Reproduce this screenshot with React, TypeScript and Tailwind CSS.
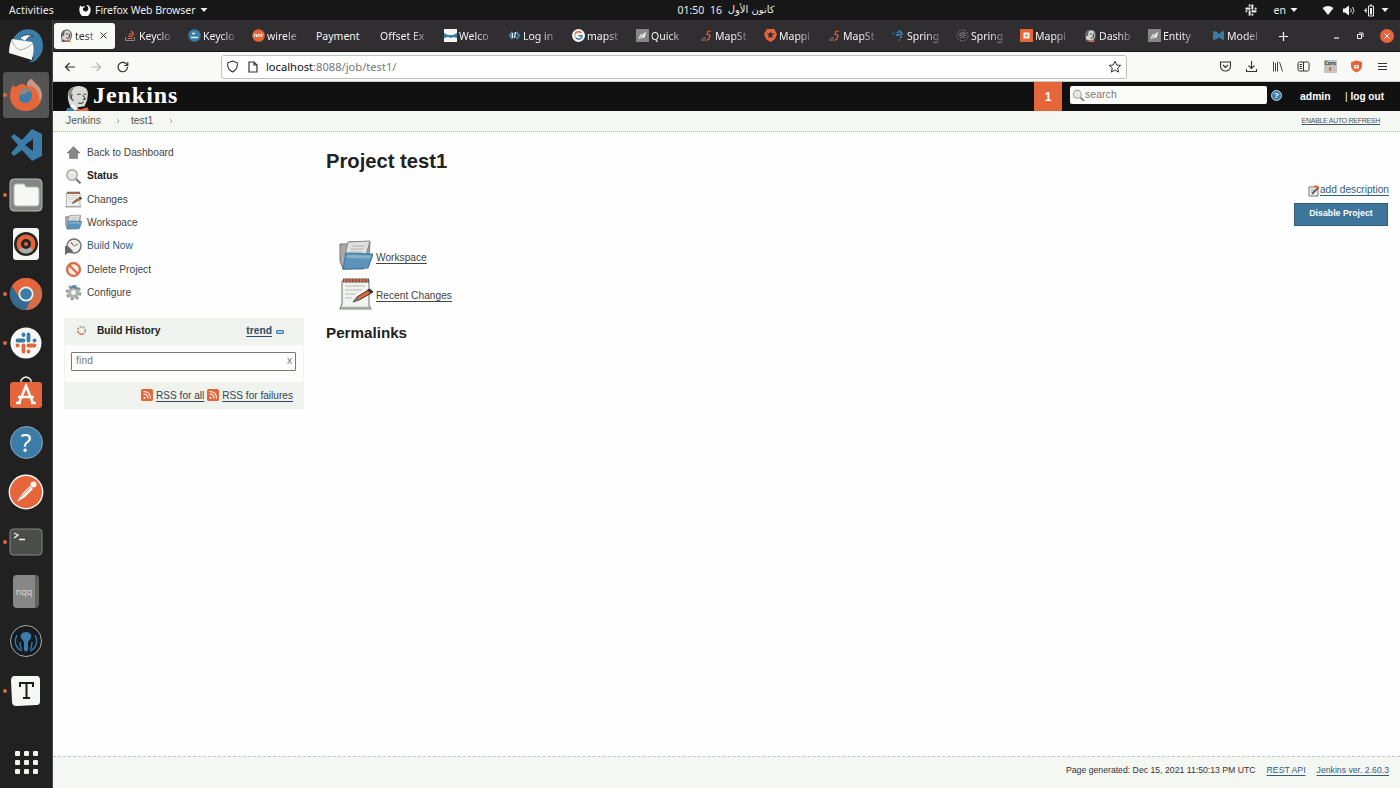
import React from "react";

type IconProps = { size?: number; className?: string; box?: string; children: React.ReactNode };

function Svg({ size = 16, className = "", box = "0 0 16 16", children }: IconProps) {
  return (
    <svg width={size} height={size} viewBox={box} fill="none" className={`shrink-0 ${className}`}>
      {children}
    </svg>
  );
}

const O = "#e5663a";
const B = "#3b7ca9";

/* ---------- launcher icons (36 x 36) ---------- */

const Thunderbird = () => (
  <Svg size={36} box="0 0 36 36">
    <path d="M8 7C13 0 25-1 31 6c6 8 5 18-1 24-2 3-6 5-9 4 3-1 5-3 5-5L5 22C2 16 4 11 8 7Z" fill={B} />
    <path d="M4 11 24 14c3 5 1 13 0 18L1 25c0-6 1-10 3-14Z" fill="#f7f8f5" />
    <path d="M4 13c2 5 5 8 8 9 5-1 9-3 13-7" stroke="#aaa" strokeWidth="1" />
    <path d="M12 10c4-4 9-4 13-2-3 0-6 2-7 5" fill="#f7f8f5" stroke="#24465f" strokeWidth="1" />
  </Svg>
);

const Firefox = () => (
  <Svg size={36} box="0 0 36 36">
    <path d="M5 8c1 1 2 2 3 2 2-2 4-3 7-3l4 2c0-3 1-6 5-7 1 4 9 6 10 16 0 9-7 16-16 16S2 28 2 19c0-4 1-8 3-11Z" fill={O} />
    <path d="M19 9c0-3 1-6 5-7 1 4 9 6 10 16-1 4-2 6-3 7 1-7-1-13-8-16Z" fill="#c59a89" />
    <path d="M13 14c4-4 11-2 11 4s-4 8-7 8c-5 0-7-4-5-8l5-1c1-1-1-3-4-3Z" fill={B} />
    <path d="M13 13c4-3 9-2 11 2-3-1-5 0-7 2l-5 1c-2 0 0-3 1-5Z" fill="#8b8682" />
  </Svg>
);

const VSCode = () => (
  <Svg size={36} box="0 0 36 36">
    <path fillRule="evenodd" d="m24 2 10 5v22l-10 5-10-11-8 6-3-3 7-8-7-8 3-3 8 6L24 2Zm1 10-8 6 8 6V12Z" fill={B} />
  </Svg>
);

const Files = () => (
  <Svg size={36} box="0 0 36 36">
    <rect x="2" y="2" width="32" height="32" rx="4" fill="#848684" stroke="#b9bcb8" />
    <path d="M6 10c0-2 1-3 2-3h8l2 3h10c2 0 3 1 3 3v13c0 2-1 3-3 3H9c-2 0-3-1-3-3V10Z" fill="#f6f8f4" stroke="#b9bcb8" />
  </Svg>
);

const Rhythmbox = () => (
  <Svg size={36} box="0 0 36 36">
    <rect x="5" y="2" width="26" height="32" rx="3" fill="#f5f6f2" />
    <circle cx="18" cy="18" r="12" fill="#262626" />
    <circle cx="18" cy="18" r="9.5" fill={O} />
    <path d="M18 18 11 24a9 9 0 0 0 14 0Z" fill="#aaa" />
    <circle cx="18" cy="18" r="5" fill="#262626" />
    <circle cx="18" cy="18" r="2" fill={O} />
  </Svg>
);

const Chrome = () => (
  <Svg size={36} box="0 0 36 36">
    <circle cx="18" cy="18" r="16" fill={O} />
    <path d="M4 10a16 16 0 0 0 14 24l5-11-5-1Z" fill="#356b91" />
    <path d="M33 12a16 16 0 0 1-15 22l7-12-1-10Z" fill="#cf6e49" />
    <path d="M4 10c3-5 8-8 14-8s13 4 15 10H18l-7 9Z" fill={O} />
    <circle cx="18" cy="18" r="7.500" fill="#f5f6f2" />
    <circle cx="18" cy="18" r="5.800" fill={B} />
  </Svg>
);

const SlackMark = ({ a, b }: { a: string; b: string }) => (
  <g strokeWidth="3.8" strokeLinecap="round">
    <path d="M15.500 9.500v.5M9.500 15.500h6" stroke={a} />
    <path d="M20.500 9.500v6M26.500 15.500h.1" stroke={a} />
    <path d="M20.500 20.500h6M20.500 26.500v.1" stroke={b} />
    <path d="M15.500 20.500v6M9.500 20.500h.1" stroke={b} />
  </g>
);

const Slack = () => (
  <Svg size={36} box="0 0 36 36">
    <circle cx="18" cy="18" r="15.500" fill="#f7f8f5" />
    <SlackMark a={B} b={O} />
  </Svg>
);

const Software = () => (
  <Svg size={36} box="0 0 36 36">
    <path d="M13 8V5q5-6 10 0v3" stroke="#f4f4f0" strokeWidth="1.300" />
    <rect x="2" y="7" width="32" height="26" rx="3" fill={O} />
    <path d="m11 28 7-17 7 17M10 22h16M8 28h5M23 28h5" stroke="#f8f8f4" strokeWidth="2.600" />
  </Svg>
);

const Help = () => (
  <div className="flex size-[33px] items-center justify-center rounded-full border border-[#8baabd] bg-[#3b7ca9] font-['Noto_Sans',sans-serif] text-[25px] leading-none text-white">
    ?
  </div>
);

const Postman = () => (
  <Svg size={36} box="0 0 36 36">
    <circle cx="18" cy="18" r="16.700" fill={O} stroke="#f7f8f5" strokeWidth="1.400" />
    <circle cx="25.500" cy="10.500" r="3" fill="#f8f8f4" />
    <path d="m9 28 5-8 8-8 3 3-8 8-8 5Z" fill="#f8f8f4" />
    <path d="m13 23 9-9" stroke={O} strokeWidth=".7" />
  </Svg>
);

const Terminal = () => (
  <Svg size={36} box="0 0 36 36">
    <rect x="2" y="5" width="32" height="26" rx="3" fill="#4b4d4b" stroke="#858785" />
    <path d="m6 9 4 2-4 3M11 15.500h6" stroke="#f4f4f0" strokeWidth="1.300" />
  </Svg>
);

const Nqq = () => (
  <div className="flex h-[33px] w-[26px] items-center justify-center rounded-sm border-r-4 border-[#606260] bg-[#868886] font-['Noto_Sans',sans-serif] text-[9px] text-[#d5d8d4]">
    nqq
  </div>
);

const Kraken = () => (
  <Svg size={36} box="0 0 36 36">
    <circle cx="18" cy="18" r="15.500" fill="#151b20" stroke="#a8aaa8" />
    <path d="M18 9c-4 0-6 3-5 6l3 4v8l2 2 2-2v-8l3-4c1-3-1-6-5-6Z" fill={B} />
    <path d="M9 12c-4 8 0 14 5 16M27 12c4 8 0 14-5 16M12 19c0 3 0 5 2 7M24 19c0 3 0 5-2 7" stroke={B} strokeWidth="1.300" />
  </Svg>
);

const Typora = () => (
  <Svg size={36} box="0 0 36 36">
    <path d="M7 3h21c3 0 4 1 4 4v21c0 3-1 4-4 4L9 33c-4 0-5-2-5-5L3 8c0-3 1-5 4-5Z" fill="#f5f7f3" />
    <path d="M12 14v-4h13v4M18.500 10v15M15 25h7" stroke="#1a1a1a" strokeWidth="2" />
  </Svg>
);

const launcher: { icon: React.ReactNode; dot?: boolean; active?: boolean }[] = [
  { icon: <Thunderbird /> },
  { icon: <Firefox />, dot: true, active: true },
  { icon: <VSCode /> },
  { icon: <Files />, dot: true },
  { icon: <Rhythmbox /> },
  { icon: <Chrome />, dot: true },
  { icon: <Slack />, dot: true },
  { icon: <Software /> },
  { icon: <Help /> },
  { icon: <Postman /> },
  { icon: <Terminal />, dot: true },
  { icon: <Nqq /> },
  { icon: <Kraken /> },
  { icon: <Typora />, dot: true },
];

function Dock() {
  return (
    <nav className="flex w-[53px] shrink-0 flex-col border-r border-[#484648] bg-[#222122] pt-px">
      {launcher.map((item, i) => (
        <div key={i} className="relative flex h-[49.6px] shrink-0 items-center justify-center px-[3px]">
          {item.dot && <span className="absolute left-[3px] size-1 rounded-full bg-[#e5663a]" />}
          <div className={item.active ? "flex h-[46px] w-full items-center justify-center rounded-[3px] bg-[#555455]" : "flex items-center justify-center"}>
            {item.icon}
          </div>
        </div>
      ))}
      <div className="mt-auto mb-[14px] grid grid-cols-3 gap-1 self-center">
        {Array.from({ length: 9 }, (_, i) => (
          <span key={i} className="size-[5px] rounded-[1px] bg-[#f2f3ef]" />
        ))}
      </div>
    </nav>
  );
}

/* ---------- desktop top bar ---------- */

const Caret = () => (
  <Svg size={8} box="0 0 8 8">
    <path d="M0.500 2h7L4 6Z" fill="#f2f2f2" />
  </Svg>
);

function TopBar() {
  return (
    <header className="grid h-5 shrink-0 grid-cols-[1fr_auto_1fr] items-center bg-[#171717] font-['Noto_Sans','DejaVu_Sans',sans-serif] text-[10.5px] leading-5 text-[#ececec]">
      <div className="flex items-center pl-[9px]">
        <span className="w-[70px] tracking-[0.12px]">Activities</span>
        <Svg size={12} box="0 0 12 12">
          <path d="M1.500 1.500 3 3l2-1 1 1-2 1c-1 3 3 5 5 2 1-2 0-4-2-5 4 0 5 3 4.500 6a5.500 5.500 0 0 1-11 0C0 5 .500 3 1.500 1.500Z" fill="#fff" />
        </Svg>
        <span className="mr-[5px] ml-1 w-[100px] whitespace-nowrap tracking-[-0.06px]">Firefox Web Browser</span>
        <Caret />
      </div>
      <div className="flex w-[97px] translate-x-[26px] items-center justify-between whitespace-nowrap">
        <span>01:50</span>
        <span>16</span>
        <span className="font-['DejaVu_Sans',sans-serif] text-[10px]">كانون الأول</span>
      </div>
      <div className="flex items-center justify-end pr-[11px]">
        <Svg size={12} box="7 7 22 22" className="mr-[17px]">
          <SlackMark a="#e6e6e6" b="#e6e6e6" />
        </Svg>
        <span className="mr-1">en</span>
        <Caret />
        <Svg size={12} box="0 0 12 12" className="ml-6">
          <path d="M.5 4q5.500-4 11 0L6 11Z" fill="#f4f4f4" />
        </Svg>
        <Svg size={13} box="0 0 13 12" className="ml-2">
          <path d="M1 4h2l4-3v10L3 8H1Z" fill="#f4f4f4" />
          <path d="M8.500 4q2 2 0 4M10.500 2.500q3 3.500 0 7" stroke="#ddd" />
        </Svg>
        <Svg size={13} box="0 0 13 13" className="ml-2">
          <path d="M5.500 2h5v10h-5zM7 1h2" stroke="#eee" />
          <path d="M7 4h2v6.500H7zM1 6h3v1H1zM2.500 4h1v5h-1z" fill="#eee" />
        </Svg>
        <span className="ml-[5px] flex">
          <Caret />
        </span>
      </div>
    </header>
  );
}

/* ---------- browser tabs ---------- */

const Butler = () => (
  <Svg size={13} box="0 0 26 26">
    <path d="M5 24C2 18 2 9 6 5s12-4 15 0 2 11 0 15l-4 4Z" fill="#d3d4d0" stroke="#555" strokeWidth="2" />
    <path d="M4 14C1 8 5 2 12 2l-3 4-1 8Z" fill="#666" />
    <path d="M12 10h4m2 0h3M18 11l2 4h-3M13 18q3 2 6-1" stroke="#333" strokeWidth="1.800" />
    <path d="m10 22 6 2 5-2v4H10Z" fill={O} />
    <path d="m2 25 5-4 4 5Z" fill="#555" />
  </Svg>
);

const StackIcon = () => (
  <Svg size={13} box="0 0 13 13">
    <path d="M1.500 8v3.500h9V8" stroke="#888" />
    <path d="M3.500 9.500h5M4 7l4.500 1M5 4.500l4 2M7 2l3 3.500" stroke={O} strokeWidth="1.200" />
  </Svg>
);
const BlueDot = () => (
  <Svg size={13} box="0 0 13 13">
    <circle cx="6.500" cy="6.500" r="6.200" fill={B} />
    <path d="M4 4.500h3M3 8.500h7" stroke="#e5eef2" strokeWidth="1.500" />
  </Svg>
);
const OrangeDot = () => (
  <Svg size={13} box="0 0 13 13">
    <circle cx="6.500" cy="6.500" r="6.300" fill={O} />
    <path d="M2.500 8V5.500h2V8M6 8V5.500h2V8M9.500 4v4M11 5.500 9.500 7" stroke="#fff" strokeWidth=".9" />
  </Svg>
);
const Handshake = () => (
  <Svg size={13} box="0 0 13 13">
    <path d="M0 0h13v13H0z" fill="#f6f7f3" />
    <path d="m0 4 4 2h5l4-2v5L9 8l-2 1-3-1-4 1Z" fill={B} />
  </Svg>
);
const BlueCode = () => (
  <Svg size={13} box="0 0 13 13">
    <path d="M4.500 3 2 6.500 4.500 10M8.500 3 11 6.500 8.500 10" stroke={B} strokeWidth="2.400" />
    <path d="M4.500 4v5M7.500 3 6.500 9" stroke="#dfe6ea" strokeWidth="1.400" />
  </Svg>
);
const Google = () => (
  <Svg size={13} box="0 0 13 13">
    <circle cx="6.500" cy="6.500" r="6.500" fill="#f7f8f5" />
    <path d="M9.500 4A4 4 0 0 0 3 5" stroke={O} strokeWidth="1.500" />
    <path d="M3 5a4 4 0 0 0 1 4" stroke="#bbb" strokeWidth="1.500" />
    <path d="M4 9.200c3 2 6 .5 6-2.500H6.500" stroke={B} strokeWidth="1.500" />
  </Svg>
);
const GreySquare = () => (
  <Svg size={13} box="0 0 13 13">
    <path d="M0 0h13v13H0z" fill="#858785" />
    <path d="m2.500 10 1.500-4 6-3-1 5Z" fill="#eceeea" />
    <path d="m4 9 4-5" stroke="#999" />
  </Svg>
);
const MapSt = () => (
  <Svg size={13} box="0 0 13 13">
    <path d="m11 2-3 .5L7 5.500l3 .5-1 4-3 1.500" stroke={O} strokeWidth="1.200" />
    <path d="M1 11h4M3 9h3" stroke="#888" />
  </Svg>
);
const Shield = () => (
  <Svg size={13} box="0 0 13 13">
    <path d="m3 0 7 0 3 5-2 5-4.500 3L2 10 0 5Z" fill={O} />
    <path d="m6.500 2.500 1 2h3L8 6.500 9 9 6.500 8 4 9l1-2.500-2.500-2h3Z" fill="#302e30" />
  </Svg>
);
const BlueBird = () => (
  <Svg size={13} box="0 0 13 13">
    <path d="m1 4 1 1M5 4l3-2 2 3-3 1M4 6h3M8 8h2M7 11h1" stroke={B} strokeWidth="1.800" />
  </Svg>
);
const GreyRing = () => (
  <Svg size={13} box="0 0 13 13">
    <circle cx="6.500" cy="6.500" r="5.500" stroke="#777" strokeDasharray="2 1" />
    <path d="M3 5q4-3 7 0M3 7q4-3 7 0M4 9q3-3 5 0" stroke="#888" />
  </Svg>
);
const OrangeSquare = () => (
  <Svg size={13} box="0 0 13 13">
    <path d="M0 0h13v13H0z" fill={O} />
    <path d="M3.500 3.500h6v6h-6z" fill="#f6f6f2" />
    <path d="M5.500 5.500h2v2h-2z" fill={O} />
  </Svg>
);
const BlueM = () => (
  <Svg size={13} box="0 0 13 13">
    <path d="m1 2 4 1 2 2 2-2 3-1v9l-3-1-2-2-2 2-4 1Z" fill={B} />
  </Svg>
);

const tabs: [string, React.ReactNode][] = [
  ["Keyclo", <StackIcon />],
  ["Keyclo", <BlueDot />],
  ["wirele", <OrangeDot />],
  ["Payment", null],
  ["Offset Ex", null],
  ["Welco", <Handshake />],
  ["Log in", <BlueCode />],
  ["mapst", <Google />],
  ["Quick", <GreySquare />],
  ["MapSt", <MapSt />],
  ["Mappi", <Shield />],
  ["MapSt", <MapSt />],
  ["Spring", <BlueBird />],
  ["Spring", <GreyRing />],
  ["Mappi", <OrangeSquare />],
  ["Dashb", <Butler />],
  ["Entity", <GreySquare />],
  ["Model", <BlueM />],
];

function TabStrip() {
  return (
    <div className="flex h-8 shrink-0 items-center border-b border-[#151515] bg-[#302e30] font-['Noto_Sans',sans-serif] text-[10.5px] text-[#f2f2f2]">
      <div className="ml-px flex w-16 shrink-0">
        <div className="flex h-[26px] w-[61px] items-center rounded-[3px] bg-[#f8faf6] pl-1.5 text-[#333]">
          <Butler />
          <span className="mt-0.5 ml-[2px] w-[23px] [mask-image:linear-gradient(to_right,black_50%,rgba(0,0,0,0.35))]">test</span>
          <Svg size={9} box="0 0 9 9" className="ml-px">
            <path d="m1.500 1.500 6 6m0-6-6 6" stroke="#333" />
          </Svg>
        </div>
      </div>
      {tabs.map(([label, icon], i) => (
        <div key={i} className="flex w-16 shrink-0 items-center gap-[2px] pl-1.5">
          {icon}
          <span
            className={
              icon
                ? "mt-0.5 w-[34px] whitespace-nowrap [mask-image:linear-gradient(to_right,black_55%,rgba(0,0,0,0.15))]"
                : label === "Payment"
                  ? "mt-0.5 w-12 whitespace-nowrap"
                  : "mt-0.5 w-12 whitespace-nowrap [mask-image:linear-gradient(to_right,black_65%,rgba(0,0,0,0.25))]"
            }
          >
            {label}
          </span>
        </div>
      ))}
      <Svg size={11} box="0 0 11 11" className="mt-px ml-[8px]">
        <path d="M5.500 1v9M1 5.500h9" stroke="#fff" strokeWidth="1.200" />
      </Svg>
      <div className="ml-auto flex items-center gap-[15px] pr-1.5">
        <Svg size={8} box="0 0 8 8">
          <path d="M1 6h5" stroke="#eee" strokeWidth="1.200" />
        </Svg>
        <Svg size={9} box="0 0 9 9">
          <path d="M1.500 3.500h4v4h-4zM3 2h4v4" stroke="#eee" />
        </Svg>
        <Svg size={14} box="0 0 14 14">
          <circle cx="7" cy="7" r="7" fill={O} />
          <path d="m4.500 4.500 5 5m0-5-5 5" stroke="#fff" />
        </Svg>
      </div>
    </div>
  );
}

/* ---------- browser toolbar ---------- */

function Toolbar() {
  return (
    <div className="flex h-[30px] shrink-0 items-center border-b border-[#c9ccc8] bg-[#f9faf7] font-['Noto_Sans',sans-serif]">
      <div className="flex w-[168px] shrink-0 items-center pl-[11px]">
        <Svg size={12} box="0 0 12 12">
          <path d="M11 6H1.500M5.500 2l-4 4 4 4" stroke="#333" strokeWidth="1.200" />
        </Svg>
        <Svg size={12} box="0 0 12 12" className="ml-3.5">
          <path d="M1 6h9.500M6.500 2l4 4-4 4" stroke="#b5b7b4" strokeWidth="1.200" />
        </Svg>
        <Svg size={12} box="0 0 12 12" className="ml-[15px]">
          <path d="M10.500 6A4.700 4.700 0 1 1 9 2.600L10.500 4M10.800 1v3.500H7.300" stroke="#333" strokeWidth="1.200" />
        </Svg>
      </div>
      <div className="flex h-6 w-[906px] shrink-0 items-center rounded-[3px] border border-[#bfc1be] bg-white pr-1 pl-1">
        <Svg size={13} box="0 0 13 13">
          <path d="m6.500 1 4.800 1.800v2.500c0 3-1.800 5-4.800 6.700-3-1.700-4.800-3.700-4.800-6.700V2.800Z" stroke="#333" strokeWidth="1.100" />
        </Svg>
        <Svg size={12} box="0 0 12 12" className="ml-2">
          <path d="M2 1h5l3 3v7H2ZM7 1v3h3" stroke="#333" strokeWidth="1.200" />
        </Svg>
        <span className="ml-[7px] text-[11.15px] leading-none text-[#777]">
          <span className="text-[#111]">localhost</span>:8088/job/test1/
        </span>
        <Svg size={14} box="0 0 14 14" className="ml-auto">
          <path d="m7 1.200 1.700 3.800 4.100.4-3.100 2.700.9 4L7 10l-3.600 2.100.9-4L1.200 5.400 5.300 5Z" stroke="#333" />
        </Svg>
      </div>
      <div className="ml-auto flex items-center gap-[13.2px] pr-[11px]">
        <Svg size={13} box="0 0 13 13">
          <path d="M1.500 2h10v4c0 3-2 5-5 5s-5-2-5-5ZM4 5l2.500 2.500L9 5" stroke="#333" strokeWidth="1.100" />
        </Svg>
        <Svg size={13} box="0 0 13 13">
          <path d="M6.500 1v7M3.500 5.500l3 3 3-3M1.500 9v2.500h10V9" stroke="#333" strokeWidth="1.100" />
        </Svg>
        <Svg size={13} box="0 0 13 13">
          <path d="M2.500 1.500v10M4.500 3v8.500M6.500 1.500v10M8.500 2l3 9.500" stroke="#444" />
        </Svg>
        <Svg size={13} box="0 0 13 13">
          <rect x="1" y="2" width="11" height="9" rx="1.500" stroke="#333" />
          <path d="M6.500 2v9M2.500 4.500H5M2.500 6.500H5M2.500 8.500H5" stroke="#333" />
        </Svg>
        <div className="flex size-[13px] flex-col items-center bg-[#c3c5c2] text-[5px] leading-[7px] font-bold text-[#333]">
          Cors
          <span className="h-1 w-0.5 bg-[#e5663a]" />
        </div>
        <Svg size={13} box="0 0 13 13">
          <path d="M6.500.5 12 2v4c0 3-2 5-5.500 6.500C3 11 1 9 1 6V2Z" fill={O} />
          <path d="M4 5h5v3.500H4z" fill="#f6e6df" />
          <path d="M5.500 6h2v1h-2z" fill={O} />
        </Svg>
        <Svg size={13} box="0 0 13 13">
          <path d="M2 3.500h9M2 6.500h9M2 9.500h9" stroke="#333" strokeWidth="1.100" />
        </Svg>
      </div>
    </div>
  );
}

/* ---------- Jenkins icons ---------- */

const Magnifier = ({ size = 17 }: { size?: number }) => (
  <Svg size={size} box="0 0 17 17">
    <circle cx="7" cy="7" r="5.200" fill="#e3e6e2" stroke="#a4a7a3" strokeWidth="1.400" />
    <path d="M5 5q3-2 5 1" stroke="#fff" />
    <path d="m11 11 4.500 4.500" stroke="#777" strokeWidth="2" />
  </Svg>
);

const Notepad = ({ size = 17 }: { size?: number }) => (
  <Svg size={size} box="0 0 34 34">
    <path d="M3 4h27v24l2 4H1l2-5Z" fill="#f1f3ef" stroke="#868886" strokeWidth="1.200" />
    <path d="M2 31h30" stroke="#a6a8a5" strokeWidth="2.500" />
    <path d="M4 3.500h26" stroke="#555" strokeWidth="4" />
    <path d="M5 3.500h24" stroke={O} strokeWidth="3" strokeDasharray="2 1.200" />
    <path d="M6 9h20M6 13h17M6 17h11M6 21h7" stroke="#b5b7b3" />
    <path d="m31 12 3 3-14 8-6 2 4-5Z" fill={O} stroke="#333" />
    <path d="m14 25 4-5 2 3Z" fill="#777" />
    <path d="m30 12 4 3-3 1-3-3Z" fill="#333" />
  </Svg>
);

const Folder = ({ size = 17 }: { size?: number }) => (
  <Svg size={size} box="0 0 34 34">
    <path d="M1 5h7l2-2h21l-1 14-5 13H4L1 22Z" fill="#a7a9a6" stroke="#777" />
    <path d="m9 3 22-1-4 14H6Z" fill="#dfe1dd" stroke="#858785" />
    <path d="M13 7h13M12 10h12M11 13h12" stroke="#b0b2af" />
    <path d="m7 14 27 1-5 14-25 1Z" fill="#5d93b8" stroke={B} strokeWidth="1.200" />
    <path d="m8 16 24 .5-1 3-24-.5Z" fill="#88b0c8" />
  </Svg>
);

const Home = () => (
  <Svg size={17} box="0 0 17 17">
    <path d="m8.500 2.500 6.500 6.500h-2.500v5.500h-8V9H2Z" fill="#858785" stroke="#6f716f" strokeWidth=".6" />
  </Svg>
);

const BuildClock = () => (
  <Svg size={17} box="0 0 17 17">
    <circle cx="9" cy="8" r="7" fill="#ebeee9" stroke="#6c6e6c" strokeWidth="1.400" />
    <path d="m9 8-3-3M9 8l4-2" stroke="#777" />
    <path d="m6 4 2 2" stroke={O} />
    <path d="M0 8h3l5 5-1 2H3l-3 2Z" fill="#686a68" />
  </Svg>
);

const Forbidden = () => (
  <Svg size={17} box="0 0 17 17">
    <circle cx="8.500" cy="8.500" r="6.200" fill="#f6f1ed" stroke={O} strokeWidth="2" />
    <circle cx="8.500" cy="8.500" r="7.300" stroke="#9c4c30" strokeWidth=".5" />
    <path d="m4.200 4.200 8.600 8.600" stroke={O} strokeWidth="2.200" />
  </Svg>
);

const Gear = () => (
  <Svg size={17} box="0 0 17 17">
    <circle cx="8.500" cy="8.500" r="6.600" stroke="#8b8e8b" strokeWidth="2.400" strokeDasharray="2.800 2.380" />
    <circle cx="8.500" cy="8.500" r="4.200" fill="#f6f7f3" stroke="#b0b3af" strokeWidth="3.600" />
    <path d="M6 4.500 8 2l2 2h3" stroke={B} strokeWidth="1.400" />
  </Svg>
);

const Rss = () => (
  <Svg size={12} box="0 0 12 12">
    <rect width="12" height="12" rx="1.500" fill={O} />
    <path d="M2.500 5q4.500 0 4.500 4.500M2.500 2.500Q9.500 2.500 9.500 9.500" stroke="#fff" strokeWidth="1.100" />
    <circle cx="3.500" cy="8.700" r="1" fill="#fff" />
  </Svg>
);

/* ---------- Jenkins page ---------- */

function JenkinsHeader() {
  return (
    <header className="flex h-[29px] shrink-0 bg-[#111] text-white">
      <div className="flex items-end pl-[12px]">
        <Svg size={26} box="0 0 26 28">
          <path d="M6 25C2 19 0 8 5 4S18 0 22 4c3 4 1 8 1 12l-3 7Z" fill="#d9dad6" />
          <path d="M4 14C0 8 4 3 9 2L6 8l1 7-2 1Z" fill="#8b8c89" />
          <path d="M12 10h4m3 0h3M18 11l3 4-3 1M13 19q4 2 6-1M7 10q-3 4 1 7" stroke="#444" strokeWidth="1.200" />
          <path d="m0 28 1-3 6-1 3 4Z" fill={B} />
          <path d="m12 25 4 1 7-2 2 4H11Z" fill={O} />
          <path d="m7 20 6 5-3 3-5-5Z" fill="#f6f6f3" />
        </Svg>
        <span className="mb-[2px] ml-[2px] font-['Liberation_Serif',serif] text-[24px] leading-[27px] font-bold tracking-[0.95px]">Jenkins</span>
      </div>
      <div className="ml-auto flex items-center text-[10.4px] font-bold">
        <div className="flex h-full w-7 items-center justify-center bg-[#e5663a] text-[12px]">1</div>
        <div className="mb-[3px] ml-2 flex h-[18px] w-[197px] items-center rounded-[2px] bg-[#fbfcf9] pl-[2px] font-normal text-[#777]">
          <Magnifier size={13} />
          <span className="tracking-[0.1px]">search</span>
        </div>
        <div className="mb-[2px] ml-1 flex size-[11px] items-center justify-center rounded-full border border-[#c6d4dc] bg-[#3b7ca9] text-[8px] leading-none">?</div>
        <span className="ml-[18px] w-[45px]">admin</span>
        <span className="mr-[15px] w-10 text-[10.1px] whitespace-nowrap">
          <span className="font-normal">|</span> log out
        </span>
      </div>
    </header>
  );
}

const Chevron = () => (
  <Svg size={6} box="0 0 6 6">
    <path d="m2 1 2 2-2 2" stroke="#9a9c99" />
  </Svg>
);

function Breadcrumbs() {
  return (
    <div className="flex h-[21px] shrink-0 items-center border-b border-dotted border-[#b3b6ae] bg-[#f5f7f3] pl-[13px] text-[10.3px] text-[#555]">
      <span className="w-[49px]">Jenkins</span>
      <Chevron />
      <span className="ml-[10px] w-[37px]">test1</span>
      <Chevron />
      <a className="mr-5 ml-auto text-[7px] tracking-[-0.29px] text-[#456] underline">ENABLE AUTO REFRESH</a>
    </div>
  );
}

const tasks: [string, React.ReactNode, string][] = [
  ["Back to Dashboard", <Home />, "text-[#444]"],
  ["Status", <Magnifier />, "font-bold text-[#222]"],
  ["Changes", <Notepad />, "text-[#444]"],
  ["Workspace", <Folder />, "text-[#444]"],
  ["Build Now", <BuildClock />, "text-[#2c5d80]"],
  ["Delete Project", <Forbidden />, "text-[#444]"],
  ["Configure", <Gear />, "text-[#444]"],
];

function SidePanel() {
  return (
    <aside className="w-[251px] shrink-0 pt-[9px] pl-[11px] text-[10.2px]">
      <ul className="mb-[14px]">
        {tasks.map(([label, icon, tone]) => (
          <li key={label} className="flex h-[23.35px] items-center gap-[5px] pl-px">
            {icon}
            <span className={tone}>{label}</span>
          </li>
        ))}
      </ul>
      <section className="w-60 border border-[#f1f3ef]">
        <div className="flex h-[26px] items-center bg-[#eff2ed] pr-[19px] pb-1 pl-[11px]">
          <Svg size={11} box="0 0 11 11">
            <circle cx="5.500" cy="5.500" r="3.700" stroke="#aaa" strokeWidth="2" strokeDasharray="2 1" />
            <path d="M2 6q1 4 5 3" stroke={O} />
          </Svg>
          <span className="ml-[10px] text-[10.2px] font-bold text-[#222]">Build History</span>
          <a className="mr-1 ml-auto text-[10.3px] font-bold text-[#2a4d68] underline underline-offset-2">trend</a>
          <span className="mt-1 h-1 w-2 rounded-[1px] border border-[#3b7ca9] bg-[#a9c5d6]" />
        </div>
        <div className="flex h-[37px] items-start bg-[#fcfdfa] pt-[7px] pr-[7px] pl-1.5">
          <div className="flex h-[19px] w-full items-center justify-between rounded-[1px] border border-[#777] bg-white pr-[3px] pb-px pl-1 leading-none text-[#777]">
            <span className="tracking-[0.2px]">find</span>
            <span>x</span>
          </div>
        </div>
        <div className="flex h-[26px] items-center justify-end gap-[3px] bg-[#eff2ed] pr-2.5 text-[10.1px] text-[#345]">
          <Rss />
          <a className="underline underline-offset-2">RSS for all</a>
          <Rss />
          <a className="underline underline-offset-2">RSS for failures</a>
        </div>
      </section>
    </aside>
  );
}

function MainPanel() {
  return (
    <main className="flex min-w-0 flex-1 justify-between pt-[17px] pr-[11px] pl-[22px]">
      <div>
        <h1 className="text-[20.2px] leading-6 font-bold text-[#222]">Project test1</h1>
        <div className="mt-[66px] flex flex-col gap-1 pl-[13px] text-[10.2px] text-[#444]">
          <div className="flex h-[34px] items-center gap-[3px]">
            <Folder size={34} />
            <a className="mt-[3px] underline underline-offset-2">Workspace</a>
          </div>
          <div className="flex h-[34px] items-center gap-[3px]">
            <Notepad size={34} />
            <a className="mt-[3px] underline underline-offset-2">Recent Changes</a>
          </div>
        </div>
        <h2 className="mt-[12px] text-[15.2px] leading-5 font-bold text-[#222]">Permalinks</h2>
      </div>
      <div className="flex flex-col items-end pt-[34px]">
        <div className="flex items-center text-[10.2px] leading-[14px] text-[#345d7b]">
          <Svg size={12} box="0 0 12 12" className="mt-px">
            <path d="M1 2h9v9H1z" fill="#eee" stroke="#777" />
            <path d="M3 5h4M3 7h3" stroke="#999" />
            <path d="m4 9 6-6" stroke="#444" strokeWidth="1.600" />
            <path d="M6 1.500h3l2 2" stroke={O} strokeWidth="2" />
          </Svg>
          <a className="underline underline-offset-2">add description</a>
        </div>
        <button className="mt-[6px] mr-px h-[23px] w-[94px] border border-[#355d79] bg-[#3d759b] pb-[3px] text-[8.8px] leading-none font-bold text-white">Disable Project</button>
      </div>
    </main>
  );
}

export default function App() {
  return (
    <div className="flex h-[788px] w-[1400px] flex-col overflow-hidden bg-white">
      <TopBar />
      <div className="flex min-h-0 flex-1">
        <Dock />
        <div className="flex min-w-0 flex-1 flex-col">
          <TabStrip />
          <Toolbar />
          <div className="flex min-h-0 flex-1 flex-col bg-[#fefefe] font-['Liberation_Sans',Arial,sans-serif]">
            <JenkinsHeader />
            <Breadcrumbs />
            <div className="flex flex-1">
              <SidePanel />
              <MainPanel />
            </div>
            <footer className="flex h-8 shrink-0 items-center justify-end gap-[11px] border-t border-dashed border-[#c3c6c0] bg-[#f5f7f3] pr-[11px] pb-[3px] text-[8.7px] text-[#333]">
              <span>Page generated: Dec 15, 2021 11:50:13 PM UTC</span>
              <a className="text-[#345d7b] underline underline-offset-2">REST API</a>
              <a className="text-[#345d7b] underline underline-offset-2">Jenkins ver. 2.60.3</a>
            </footer>
          </div>
        </div>
      </div>
    </div>
  );
}
